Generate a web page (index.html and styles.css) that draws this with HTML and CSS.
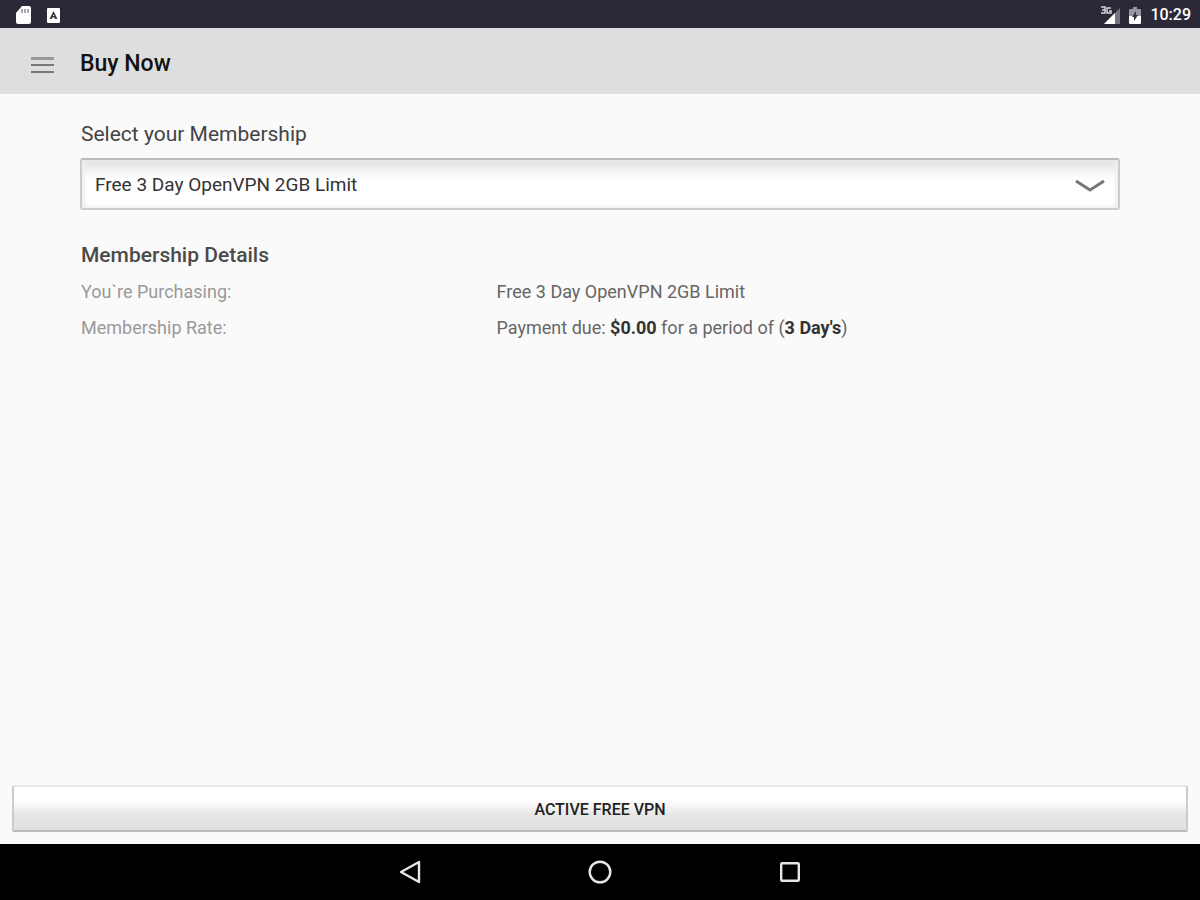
FILE: index.html
```
<!DOCTYPE html>
<html lang="en">
<head>
    <meta charset="UTF-8">
    <meta name="viewport" content="width=device-width, initial-scale=1.0">
    <title>Buy Now</title>
    <link rel="stylesheet" href="styles.css">
</head>
<body>

<div class="status-bar">
    <div class="status-left">
        <svg width="16" height="20" viewBox="0 0 16 20">
            <path d="M6 1h7a2 2 0 0 1 2 2v14a2 2 0 0 1-2 2H2a2 2 0 0 1-2-2V8z" fill="#fff"/>
            <path d="M6 4v4M9 4v4M12 4v4" stroke="#aaa8b0" stroke-width="2"/>
        </svg>
        <svg width="14" height="16" viewBox="0 0 14 16">
            <rect width="13" height="15" y="1" rx="1" fill="#fff"/>
            <path d="M6.5 4l4 8h-2l-2-2-2 2h-2z" fill="#3a3743"/>
            <path d="M6 8h1v1H6z" fill="#fff"/>
        </svg>
    </div>
    <div class="status-right">
        <svg width="20" height="20" viewBox="0 0 20 20">
            <path d="M20 3v16H4z" fill="#77747f"/>
            <path d="M15 8v11H4z" fill="#fff"/>
            <path d="M1 2h4v6H1M2 5h3M11 3H7v5h4V6H9" fill="none" stroke="#d5d4d8" stroke-width="1.5"/>
        </svg>
        <svg width="12" height="18" viewBox="0 0 12 18">
            <path d="M4 1h4v2h3a1 1 0 0 1 1 1v6H0V4a1 1 0 0 1 1-1h3z" fill="#9795a0"/>
            <path d="M0 10h12v7a1 1 0 0 1-1 1H1a1 1 0 0 1-1-1z" fill="#fff"/>
            <path d="M7 5l-4 6h2v4l4-6H7z" fill="#35323f"/>
        </svg>
        <span class="clock">10:29</span>
    </div>
</div>

<header class="header">
    <button class="menu-btn" type="button" aria-label="Menu">
        <svg width="24" height="18" viewBox="0 0 24 18">
            <path d="M0 2.5h23" stroke="#999" stroke-width="3"/>
            <path d="M0 9h23M0 16h23" stroke="#777" stroke-width="2"/>
        </svg>
    </button>
    <h1>Buy Now</h1>
</header>

<main class="content">
    <label class="section-title" for="membership">Select your Membership</label>
    <div class="select-wrap">
        <select id="membership" class="membership">
            <option>Free 3 Day OpenVPN 2GB Limit</option>
        </select>
        <svg class="arrow" width="30" height="14" viewBox="0 0 30 14">
            <path d="M1 2l14 9 14-9" fill="none" stroke="#777" stroke-width="3"/>
        </svg>
    </div>

    <h2 class="section-title details-title">Membership Details</h2>
    <dl class="details">
        <dt>You`re Purchasing:</dt>
        <dd>Free 3 Day OpenVPN 2GB Limit</dd>
        <dt>Membership Rate:</dt>
        <dd>Payment due: <b>$0.00</b> for a period of (<b>3 Day's</b>)</dd>
    </dl>
</main>

<div class="actions">
    <button class="active-btn" type="button">ACTIVE FREE VPN</button>
</div>

<nav class="nav-bar">
    <button type="button" aria-label="Back">
        <svg width="24" height="24" viewBox="0 0 24 24">
            <path d="M21 2v20L3 12z" fill="none" stroke="#e6e6e6" stroke-width="2.4" stroke-linejoin="round"/>
        </svg>
    </button>
    <button type="button" aria-label="Home">
        <svg width="24" height="24" viewBox="0 0 24 24">
            <circle cx="12" cy="12" r="10.3" fill="none" stroke="#e6e6e6" stroke-width="2.4"/>
        </svg>
    </button>
    <button type="button" aria-label="Recent apps">
        <svg width="24" height="24" viewBox="0 0 24 24">
            <rect x="3.2" y="3.2" width="17.6" height="17.6" rx="1" fill="none" stroke="#e6e6e6" stroke-width="2.4"/>
        </svg>
    </button>
</nav>

</body>
</html>
```
FILE: styles.css
```
body {
    font-family: Roboto, "Noto Sans", sans-serif;
    margin: 0;
    min-height: 100vh;
    display: flex;
    flex-direction: column;
    background-color: #fafafa;
    color: #555;
}

button {
    font-family: inherit;
    cursor: pointer;
}

svg {
    display: block;
}

/* status bar */
.status-bar {
    display: flex;
    justify-content: space-between;
    align-items: center;
    box-sizing: border-box;
    height: 28px;
    padding: 2px 9px 0 16px;
    background-color: #2c2838;
    color: #fff;
}

.status-left {
    display: flex;
    align-items: center;
    gap: 15px;
}

.status-right {
    display: flex;
    align-items: center;
    gap: 9px;
}

.clock {
    font-size: 16px;
    line-height: 26px;
    font-weight: 500;
}

/* header */
.header {
    display: flex;
    align-items: center;
    box-sizing: border-box;
    height: 66px;
    padding-top: 6px;
    background-color: #dedede;
}

.menu-btn {
    padding: 2px 25px 0 31px;
    background: none;
    border: none;
}

h1 {
    margin: 0;
    font-size: 23px;
    line-height: 28px;
    font-weight: 500;
    color: #111;
}

/* content */
.content {
    flex: 1;
    padding: 24px 80px;
}

.section-title {
    display: block;
    margin: 0;
    padding-left: 1px;
    font-size: 21px;
    line-height: 32px;
    font-weight: 400;
    color: #444;
}

.select-wrap {
    position: relative;
    margin-top: 8px;
}

.membership {
    appearance: none;
    display: block;
    width: 100%;
    height: 52px;
    padding: 0 60px 0 13px;
    border: 2px solid #ccc;
    border-top-color: #bbb;
    border-radius: 3px;
    background: linear-gradient(#dedede, #f2f2f2 10px, #fff 20px);
    box-shadow: inset 3px 0 4px #eee, inset -3px 0 4px #eee;
    font-family: inherit;
    font-size: 19px;
    color: #333;
}

.arrow {
    position: absolute;
    right: 15px;
    top: 21px;
    pointer-events: none;
}

.details-title {
    margin-top: 29px;
    font-weight: 500;
    color: #4a4a4a;
}

.details {
    display: grid;
    grid-template-columns: 2fr 3fr;
    margin: 3px 0 0;
    padding-left: 1px;
    font-size: 18px;
    line-height: 36px;
}

dt {
    color: #999;
}

dd {
    margin: 0;
    color: #666;
}

dd b {
    font-weight: 700;
    color: #333;
}

/* bottom button */
.actions {
    padding: 0 12px 12px;
}

.active-btn {
    display: block;
    width: 100%;
    height: 47px;
    padding: 2px 0 0;
    border: 2px solid #ccc;
    border-top-color: #e6e6e6;
    border-bottom-color: #bbb;
    border-radius: 2px;
    background: linear-gradient(#fff 30%, #e6e6e6 65%, #e0e0e0);
    font-size: 16px;
    font-weight: 500;
    color: #222;
}

/* system navigation */
.nav-bar {
    display: flex;
    justify-content: center;
    align-items: center;
    gap: 166px;
    height: 56px;
    background-color: #000;
}

.nav-bar button {
    padding: 0;
    background: none;
    border: none;
}
```
